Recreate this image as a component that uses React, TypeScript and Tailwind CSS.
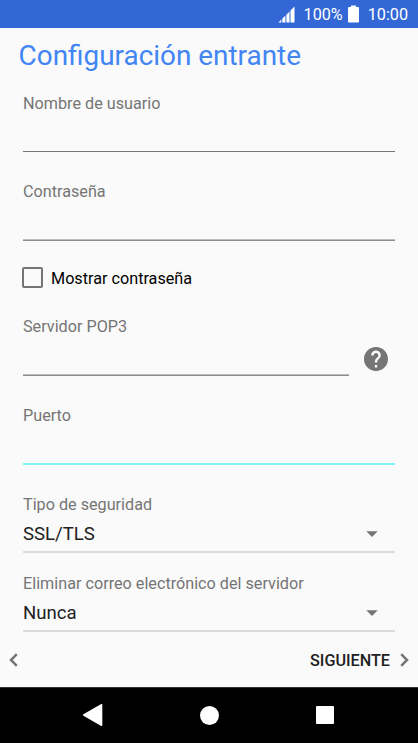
import { clsx } from "clsx";

const textStyle = "text-[16.2px] leading-5 whitespace-nowrap";
const softLine = "h-[59px] border-[#8c8c8c] shadow-[inset_0_-1px_#bdbdbd]";

function StatusBar() {
  return (
    <header className="h-7 shrink-0 bg-[#3367d6] text-white flex items-center justify-end pr-[10px]">
      <svg width="17" height="17" viewBox="0 0 17 17" className="mr-[9px]" fill="currentColor">
        <path d="M0.5 16.5 3.3 13.6V16.5zM4.3 12.8 7.4 9.6V16.5H4.3zM8.4 8.7 11.5 5.5V16.5H8.4zM12.5 4.5 16.5 0.5V16.5H12.5z" />
      </svg>
      <span className={clsx(textStyle, "pt-px")}>100%</span>
      <svg width="11" height="18" viewBox="0 0 11 18" className="ml-[5px] mr-[9px]" fill="currentColor">
        <path d="M3 0.5H8V1.9H10.2Q11 1.9 11 2.7V16.7Q11 17.5 10.2 17.5H.8Q0 17.5 0 16.7V2.7Q0 1.9 .8 1.9H3z" />
      </svg>
      <span className={clsx(textStyle, "pt-px")}>10:00</span>
    </header>
  );
}

function Field({ label, className }: { label: string; className?: string }) {
  return (
    <div className={clsx("border-b", className ?? "h-[58px] border-[#767676]")}>
      <label className={clsx(textStyle, "block text-[#757575]")}>{label}</label>
    </div>
  );
}

function Spinner({ label, value }: { label: string; value: string }) {
  return (
    <div className="h-[58px] border-b-2 border-[#dcdcdc]">
      <div className={clsx(textStyle, "text-[#757575]")}>{label}</div>
      <div className="mt-[7.5px] flex items-center justify-between pr-[17.5px]">
        <span className="text-[18.6px] leading-[22px] text-[#212121]">{value}</span>
        <svg width="12" height="6" viewBox="0 0 12 6" fill="#757575">
          <path d="M0.3 0.2H11.7L6 5.9z" />
        </svg>
      </div>
    </div>
  );
}

export default function App() {
  return (
    <div className="w-[418px] h-[743px] bg-[#fafafa] flex flex-col overflow-hidden font-[Roboto,sans-serif]">
      <StatusBar />

      <h1 className="h-[66px] shrink-0 pl-[18.6px] pt-3 text-[27.9px] leading-8 text-[#4285f4] whitespace-nowrap">
        Configuración entrante
      </h1>

      <main className="flex-1 pl-[23px] pr-[23px]">
        <Field label="Nombre de usuario" />
        <div className="h-[30px]" />
        <Field label="Contraseña" className={softLine} />

        <div className="h-[76px] pt-[26px] flex items-start">
          <div className="-ml-px size-[21px] shrink-0 rounded-[2px] border-2 border-[#757575]" />
          <span className={clsx(textStyle, "ml-2 mt-0.5 text-black")}>Mostrar contraseña</span>
        </div>

        <div className="flex">
          <div className="w-[325.5px]">
            <Field label="Servidor POP3" className={softLine} />
          </div>
          <svg width="24" height="24" viewBox="2 2 20 20" className="ml-[15.5px] mt-[30px]" fill="#757575">
            <path d="M12 2C6.48 2 2 6.48 2 12s4.48 10 10 10 10-4.48 10-10S17.52 2 12 2zm1 17h-2v-2h2v2zm2.07-7.75-.9.92C13.45 12.9 13 13.5 13 15h-2v-.5c0-1.1.45-2.1 1.17-2.83l1.24-1.26c.37-.36.59-.86.59-1.41 0-1.1-.9-2-2-2s-2 .9-2 2H8c0-2.21 1.79-4 4-4s4 1.79 4 4c0 .88-.36 1.68-.93 2.25z" />
          </svg>
        </div>
        <div className="h-[30px]" />
        <Field label="Puerto" className="h-[59px] border-b-2 border-[#80f5f5]" />
        <div className="h-[30px]" />
        <Spinner label="Tipo de seguridad" value="SSL/TLS" />
        <div className="h-[21px]" />
        <Spinner label="Eliminar correo electrónico del servidor" value="Nunca" />
      </main>

      <div className="h-[55px] shrink-0 pl-[9px] pr-[9px] flex items-center justify-between">
        <svg width="9" height="14" viewBox="0 0 9 14" fill="none" stroke="#757575" strokeWidth="2.5">
          <path d="M7.8 1.2 2 7 7.8 12.8" />
        </svg>
        <div className="flex items-center gap-[10px]">
          <span className={clsx(textStyle, "pt-0.5 font-medium text-[#212121]")}>SIGUIENTE</span>
          <svg width="9" height="14" viewBox="0 0 9 14" fill="none" stroke="#757575" strokeWidth="2.5">
            <path d="M1.2 1.2 7 7 1.2 12.8" />
          </svg>
        </div>
      </div>

      <nav className="h-14 shrink-0 border-t border-[#333333] bg-black text-white flex items-center justify-between pl-[83px] pr-[84px] pb-px">
        <svg width="20" height="22" viewBox="0 0 20 22" fill="currentColor">
          <path d="M0.4 10.3 17.8 0.2Q19.3-.5 19.3 1V21Q19.3 22.5 17.8 21.8L0.4 11.7Q-.3 11 .4 10.3z" />
        </svg>
        <div className="size-[19px] rounded-full bg-white" />
        <div className="size-[18px] rounded-[1px] bg-white" />
      </nav>
    </div>
  );
}
